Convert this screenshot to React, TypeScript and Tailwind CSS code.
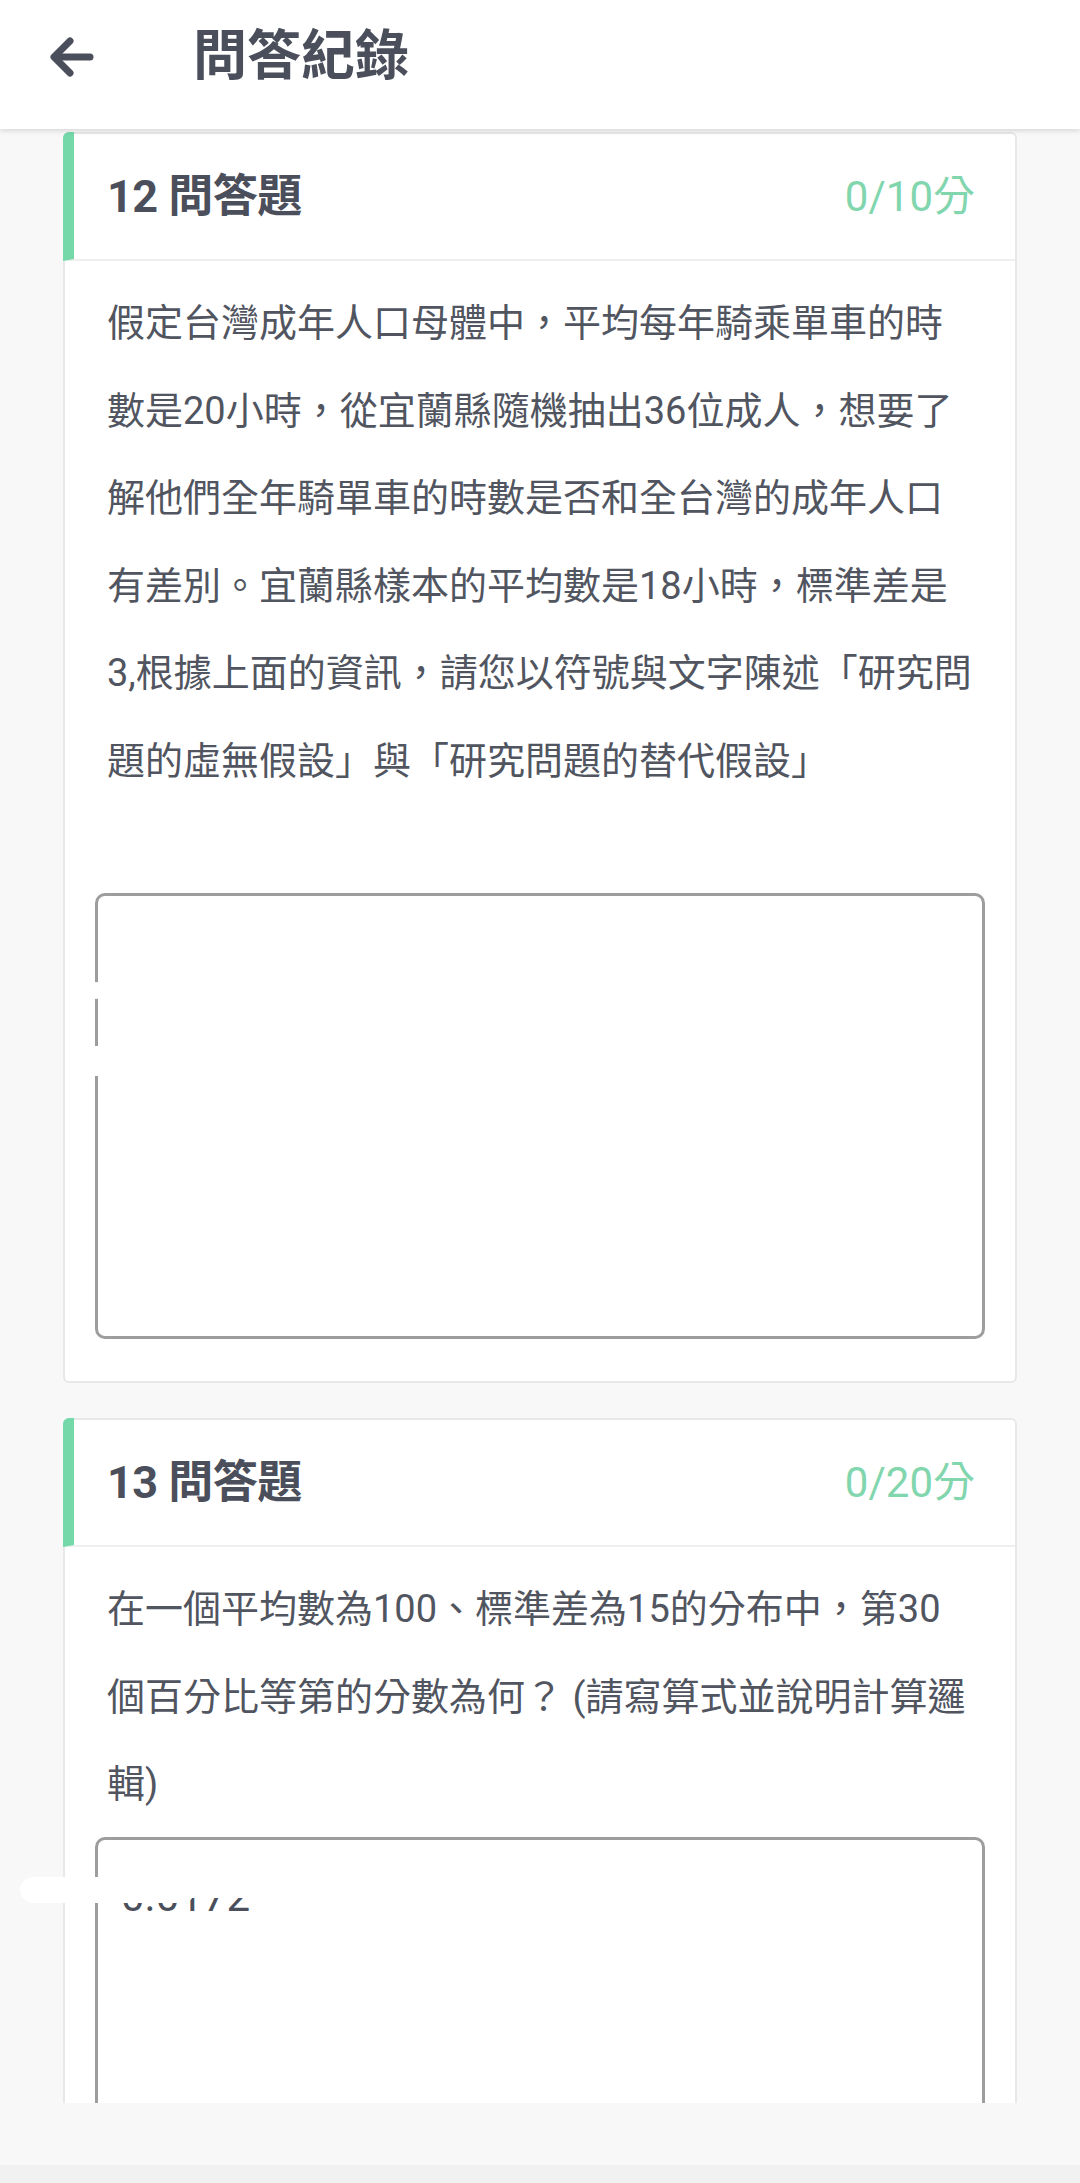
import React from 'react'

interface Question {
    no: number
    score: string
    lines: string[]
    gap: string
    answer?: string
}

const questions: Question[] = [
    {
        no: 12,
        score: '0/10分',
        lines: [
            '假定台灣成年人口母體中，平均每年騎乘單車的時',
            '數是20小時，從宜蘭縣隨機抽出36位成人，想要了',
            '解他們全年騎單車的時數是否和全台灣的成年人口',
            '有差別。宜蘭縣樣本的平均數是18小時，標準差是',
            '3,根據上面的資訊，請您以符號與文字陳述「研究問',
            '題的虛無假設」與「研究問題的替代假設」',
        ],
        gap: 'mt-[88px]',
    },
    {
        no: 13,
        score: '0/20分',
        lines: [
            '在一個平均數為100、標準差為15的分布中，第30',
            '個百分比等第的分數為何？ (請寫算式並說明計算邏',
            '輯)',
        ],
        gap: 'mt-[8px]',
        answer: '0.0172',
    },
]

function BackArrow() {
    return (
        <svg width="46" height="46" viewBox="0 0 46 46" fill="none" stroke="#4b4f5b" strokeWidth="7" strokeLinecap="round" strokeLinejoin="round">
            <path d="M41 23H6"/>
            <path d="M21 7L5 23L21 39"/>
        </svg>
    )
}

function QuestionCard({q}: {q: Question}) {
    return (
        <div className="bg-white border-2 border-[#e8e8e8] rounded-[6px] flex flex-col shrink-0">
            <div className="h-[129px] -ml-[2px] -mt-[2px] pt-[2px] flex items-center justify-between border-l-[11px] border-l-[#74d8a8] rounded-tl-[6px] border-b-2 border-b-[#efefef] pl-[33px] pr-[40px]">
                <h2 className="text-[45px] font-bold text-[#4b4f5b] leading-none tracking-[-0.5px]">{q.no} 問答題</h2>
                <span className="text-[42px] text-[#82d6ae] leading-none">{q.score}</span>
            </div>
            <div className="flex flex-col px-[30px] pt-[19px] pb-[42px]">
                <div className="pl-[12px] text-[38px] leading-[87.5px] text-[#51555f] whitespace-nowrap">
                    {q.lines.map((l, i) => <div key={i}>{l}</div>)}
                </div>
                <div className={`${q.gap} relative h-[446px] border-[3px] border-[#9d9d9d] rounded-[10px] pl-[23px] pt-[36px]`}>
                    {q.answer ? (
                        <>
                            <div className="text-[42px] leading-none text-[#4b4f5b]">{q.answer}</div>
                            {/* smudged-out answer */}
                            <div className="absolute left-[-78px] top-[37px] w-[175px] h-[26px] bg-white rounded-full"/>
                            <div className="absolute left-[92px] top-[40px] w-[66px] h-[18px] bg-white"/>
                            <div className="absolute left-[158px] top-[16px] w-[90px] h-[64px] bg-white"/>
                        </>
                    ) : (
                        <>
                            <div className="absolute left-[-9px] top-[86px] w-[14px] h-[17px] bg-white rounded-full"/>
                            <div className="absolute left-[-8px] top-[150px] w-[13px] h-[30px] bg-white"/>
                        </>
                    )}
                </div>
            </div>
        </div>
    )
}

function App() {
    return (
        <div className="w-[1080px] h-[2183px] flex flex-col bg-[#f8f8f8] overflow-hidden font-['Roboto','Noto_Sans_CJK_TC','Noto_Sans',sans-serif]">
            <div className="header relative z-10 h-[129px] shrink-0 bg-white shadow-[0_2px_5px_rgba(0,0,0,0.13)]">
                <div className="flex items-center h-[114px] pl-[49px]">
                    <BackArrow/>
                    <h1 className="ml-[98px] text-[54px] font-bold text-[#4b4f5b] leading-none">問答紀錄</h1>
                </div>
            </div>
            <div className="main h-[1974px] shrink-0 overflow-hidden px-[63px] pt-[3px] flex flex-col gap-[35px]">
                {questions.map(q => <QuestionCard key={q.no} q={q}/>)}
            </div>
            <div className="flex-1"/>
            <div className="h-[18px] shrink-0 bg-[#f1f1f1]"/>
        </div>
    )
}

export default App
